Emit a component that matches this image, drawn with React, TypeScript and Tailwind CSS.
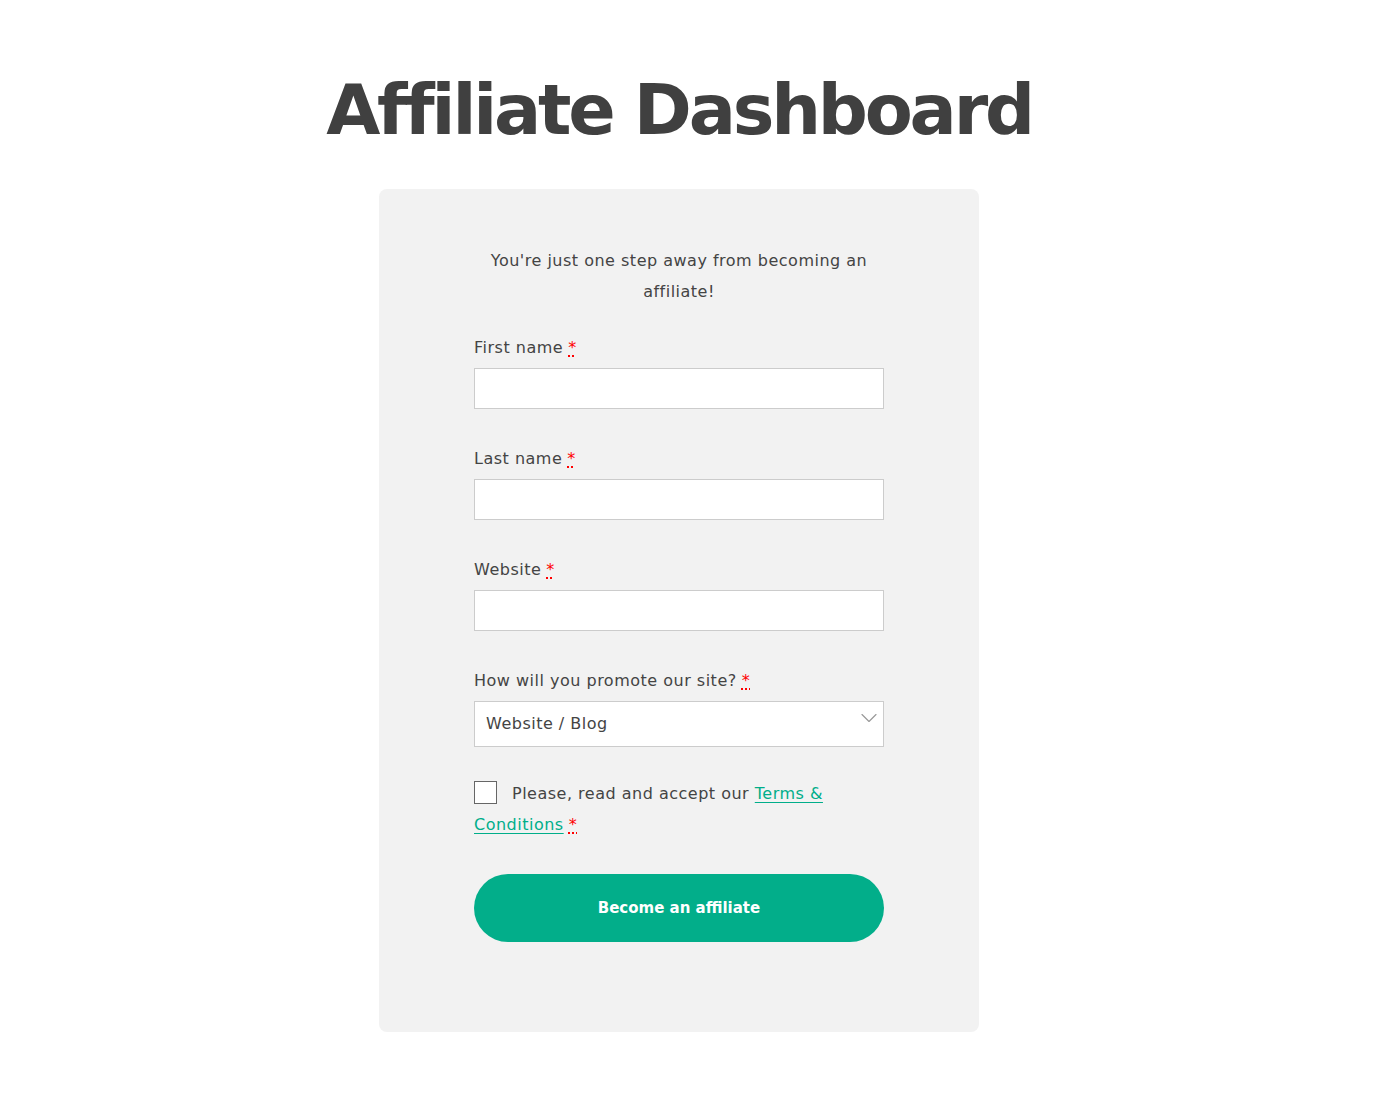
import { ChevronDown } from "lucide-react";

function Req() {
    return (
        <abbr title="required" className="ml-[5px] text-[#ff0000] underline decoration-dotted decoration-2 decoration-[#ff0000] underline-offset-[2px]">
            *
        </abbr>
    );
}

function Field({ label }: { label: string }) {
    return (
        <div className="flex flex-col">
            <label className="text-[16px] leading-[24px] tracking-[0.5px] text-[#444444] mb-[8px]">
                {label}
                <Req />
            </label>
            <input type="text" className="h-[41px] w-full bg-white border border-[#cccccc] outline-none px-3" />
        </div>
    );
}

export default function App() {
    return (
        <div className="min-h-screen bg-white font-['DejaVu_Sans',sans-serif] text-[#444444]">
            <div className="w-[1358px] flex flex-col items-center pt-[62px] pb-[79px]">
                <h1 className="text-[70px] leading-[96px] font-bold text-[#404040] tracking-[-3.2px]">Affiliate Dashboard</h1>

                <div className="mt-[31px] w-[600px] bg-[#f2f2f2] rounded-[8px] pt-[56px] pb-[90px] px-[95px]">
                    <p className="text-center text-[16px] leading-[31px] tracking-[0.5px] px-[10px]">
                        You're just one step away from becoming an affiliate!
                    </p>

                    <div className="mt-[29px] flex flex-col gap-[38px]">
                        <Field label="First name" />
                        <Field label="Last name" />
                        <Field label="Website" />
                        <div className="flex flex-col">
                            <label className="text-[16px] leading-[24px] tracking-[0.5px] text-[#444444] mb-[8px]">
                                How will you promote our site?
                                <Req />
                            </label>
                            <div className="relative">
                                <select className="appearance-none h-[46px] w-full bg-white border border-[#cccccc] outline-none pl-[11px] text-[16px] tracking-[0.5px] text-[#444444]">
                                    <option>Website / Blog</option>
                                </select>
                                <ChevronDown className="absolute right-[1px] top-[3px] w-[28px] h-[28px] text-[#999999] pointer-events-none" strokeWidth={1} />
                            </div>
                        </div>
                    </div>

                    <div className="mt-[31px] text-[16px] leading-[31px] tracking-[0.5px]">
                        <input type="checkbox" className="appearance-none align-[-5px] w-[23px] h-[23px] bg-white border border-[#666666] mr-[15px]" />
                        Please, read and accept our{" "}
                        <a href="#" className="text-[#00ae8a] underline underline-offset-[3px]">
                            Terms &amp; Conditions
                        </a>
                        <Req />
                    </div>

                    <button className="mt-[34px] w-full h-[68px] rounded-full bg-[#02ae8a] text-white font-bold text-[15px]">
                        Become an affiliate
                    </button>
                </div>
            </div>
        </div>
    );
}
